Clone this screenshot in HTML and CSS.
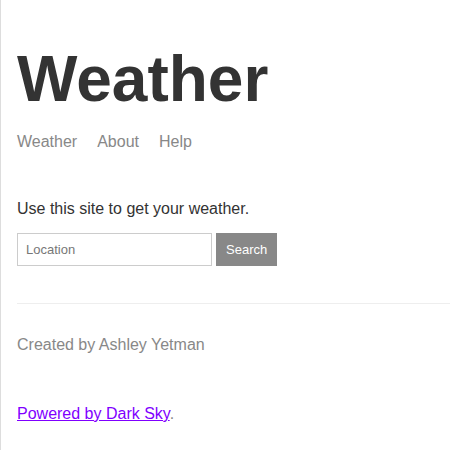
FILE: index.html
```html
<!DOCTYPE html>
<html>
<head>
<meta charset="utf-8">
<title>Weather</title>
<link rel="stylesheet" href="styles.css">
</head>
<body>
<div class="page">
  <header class="header">
    <h1 class="title">Weather</h1>
    <nav class="nav">
      <a class="nav-link" href="#">Weather</a>
      <a class="nav-link" href="#">About</a>
      <a class="nav-link" href="#">Help</a>
    </nav>
  </header>
  <main class="main">
    <p class="intro">Use this site to get your weather.</p>
    <form class="search">
      <input class="search-input" type="text" placeholder="Location">
      <button class="search-button" type="button">Search</button>
    </form>
  </main>
  <footer class="footer">
    <p class="credit">Created by Ashley Yetman</p>
    <p class="powered"><a class="powered-link" href="#">Powered by Dark Sky</a>.</p>
  </footer>
</div>
</body>
</html>
```
FILE: styles.css
```css
html, body {
  margin: 0;
  padding: 0;
  background: #fff;
}
body {
  font-family: "Liberation Sans", Arial, sans-serif;
  font-size: 16px;
  line-height: 20px;
  color: #333;
}
.page {
  border-left: 1px solid #ddd;
  padding: 47px 0 0 16px;
  min-height: 100vh;
  box-sizing: border-box;
}
.title {
  margin: 0;
  font-size: 64px;
  line-height: 64px;
  font-weight: bold;
  color: #333;
}
.nav {
  display: flex;
  gap: 20px;
  margin-top: 21px;
}
.nav-link {
  color: #888;
  text-decoration: none;
}
.intro {
  margin: 47px 0 0;
}
.search {
  display: flex;
  gap: 4px;
  margin-top: 14px;
}
.search-input {
  box-sizing: border-box;
  width: 195px;
  height: 33px;
  border: 1px solid #ccc;
  padding: 0 8px;
  font-family: "Liberation Sans", Arial, sans-serif;
  font-size: 13px;
  color: #333;
  margin: 0;
  border-radius: 0;
}
.search-input::placeholder {
  color: #777;
}
.search-button {
  box-sizing: border-box;
  height: 33px;
  padding: 0 10px;
  border: none;
  background: #888;
  color: #fff;
  font-family: "Liberation Sans", Arial, sans-serif;
  font-size: 13px;
  margin: 0;
  border-radius: 0;
}
.footer {
  margin-top: 37px;
  border-top: 1px solid #eee;
}
.credit {
  margin: 31px 0 0;
  color: #888;
}
.powered {
  margin: 49px 0 0;
  color: #888;
}
.powered-link {
  color: #7f00ff;
}
```
